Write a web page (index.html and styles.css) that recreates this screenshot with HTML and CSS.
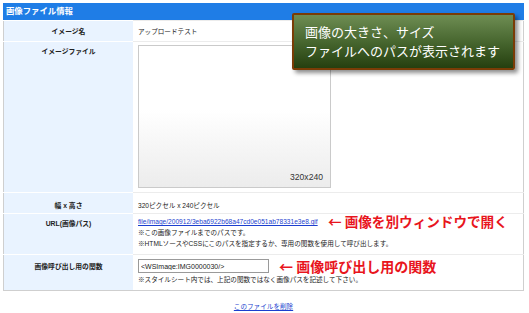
FILE: index.html
```html
<!DOCTYPE html>
<html lang="ja">
<head>
<meta charset="utf-8">
<title>画像ファイル情報</title>
<link rel="stylesheet" href="styles.css">
</head>
<body>
<div class="page">
	<div class="panel">
		<div class="panelHead">画像ファイル情報</div>
		<table class="info">
			<tr class="rowName">
				<th>イメージ名</th>
				<td>アップロードテスト</td>
			</tr>
			<tr class="rowFile">
				<th>イメージファイル</th>
				<td>
					<div class="thumb"><span class="thumbSize">320x240</span></div>
				</td>
			</tr>
			<tr class="rowSize">
				<th>幅 x 高さ</th>
				<td>320ピクセル x 240ピクセル</td>
			</tr>
			<tr class="rowUrl">
				<th>URL(画像パス)</th>
				<td>
					<div class="noteWrap">
						<a href="#" class="link">file/image/200912/3eba6922b68a47cd0e051ab78331e3e8.gif</a>
						<span class="mark markUrl">&larr; 画像を別ウィンドウで開く</span>
					</div>
					<div>※この画像ファイルまでのパスです。</div>
					<div>※HTMLソースやCSSにこのパスを指定するか、専用の関数を使用して呼び出します。</div>
				</td>
			</tr>
			<tr class="rowFunc">
				<th>画像呼び出し用の関数</th>
				<td>
					<div class="noteWrap">
						<input type="text" class="code" value="<WSImage:IMG0000030/>" />
						<span class="mark markFunc">&larr; 画像呼び出し用の関数</span>
					</div>
					<div>※スタイルシート内では、上記の関数ではなく画像パスを記述して下さい。</div>
				</td>
			</tr>
		</table>
	</div>
	<div class="del"><a href="#" class="link">このファイルを削除</a></div>

	<div class="callout">画像の大きさ、サイズ<br />ファイルへのパスが表示されます</div>
</div>
</body>
</html>
```
FILE: styles.css
```css
body {
	margin: 0;
	background: #fff;
	font-family: "Liberation Sans", "Noto Sans CJK JP", sans-serif;
	font-size: 6.6px;
	color: #222;
}

.page {
	position: relative;
	width: 529px;
	padding: 3px 0 0 3px;
}

.panel {
	width: 521px;
}

.panelHead {
	height: 17px;
	line-height: 17px;
	padding-left: 3px;
	background: #1f7de6;
	color: #fff;
	font-weight: bold;
	font-size: 8.4px;
}

.info {
	width: 100%;
	border-collapse: collapse;
	border: 1px solid #cfcfcf;
	border-top: none;
}

.info th {
	width: 129px;
	background: #e9f3ff;
	border-top: 1px solid #fff;
	font-size: 6.8px;
	font-weight: bold;
	text-align: center;
	vertical-align: top;
	padding: 5px 0 0;
}

.info td {
	border-top: 1px solid #ececec;
	vertical-align: top;
	padding: 5px 0 0 5px;
	line-height: 11px;
}

.rowName th, .rowName td {
	height: 15px;
	padding-top: 5px;
}

.rowFile td {
	padding: 3px 0 4px 5px;
}

.rowFile th {
	padding-top: 4px;
}

.thumb {
	position: relative;
	width: 191px;
	height: 141px;
	border: 1px solid #cacaca;
	background: linear-gradient(#fff 45%, #ececec);
}

.thumbSize {
	position: absolute;
	right: 7px;
	bottom: 5px;
	font-size: 8.6px;
	line-height: 10px;
	color: #333;
}

.rowSize th, .rowSize td {
	height: 13px;
	padding-top: 7px;
}

.rowUrl th {
	height: 36px;
	padding-top: 4px;
}

.rowUrl td {
	padding-top: 2px;
}

.rowFunc th {
	height: 29px;
	padding-top: 6px;
}

.rowFunc td {
	padding-top: 4px;
}

.noteWrap {
	position: relative;
}

.link {
	color: #1c3fcf;
	text-decoration: underline;
}

.code {
	display: block;
	box-sizing: border-box;
	width: 131px;
	height: 14px;
	margin: 0 0 1px;
	padding: 0 2px;
	border: 1px solid #9a9a9a;
	font-family: "Liberation Sans", "Noto Sans CJK JP", sans-serif;
	font-size: 7px;
	color: #222;
	background: #fff;
}

.mark {
	position: absolute;
	top: -3px;
	color: #e8151d;
	font-size: 13.6px;
	font-weight: bold;
	line-height: 16px;
	white-space: nowrap;
	font-family: "Noto Sans CJK JP", sans-serif;
}

.markUrl {
	left: 190px;
}

.markFunc {
	left: 141px;
	font-size: 14px;
	top: -1px;
}

.del {
	width: 521px;
	text-align: center;
	padding-top: 10px;
	line-height: 11px;
}

.callout {
	position: absolute;
	left: 292px;
	top: 13px;
	width: 197px;
	height: 41px;
	padding: 7px 11px 5px 11px;
	border: 2px solid #7a3c06;
	border-radius: 2px;
	background: linear-gradient(#6e8d53, #44632c 55%, #253f0f);
	box-shadow: 3px 3px 4px rgba(0, 0, 0, .45);
	color: #fff;
	font-family: "Noto Sans CJK JP", sans-serif;
	font-size: 13px;
	line-height: 19px;
	white-space: nowrap;
}
```
